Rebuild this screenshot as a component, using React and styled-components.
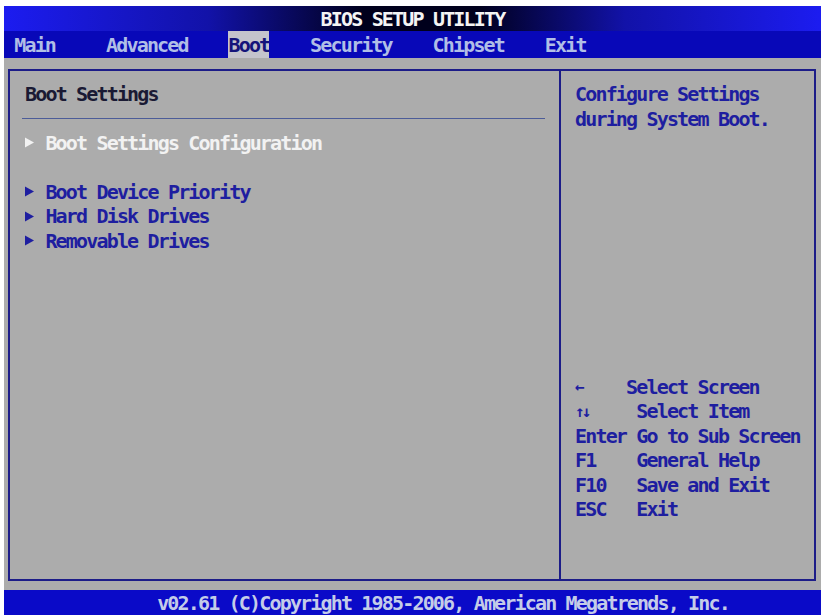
import React from 'react';
import styled, { createGlobalStyle } from 'styled-components';

const CELL = 10.21;
const ROW = 24.4;

const GlobalStyle = createGlobalStyle`
  html, body {
    margin: 0;
    background: #ffffff;
  }
`;

const Screen = styled.div`
  width: 821px;
  height: 615px;
  box-sizing: border-box;
  padding: 6px 0 0 4px;
  display: flex;
  flex-direction: column;
  overflow: hidden;
  font-family: 'DejaVu Sans Mono', 'Liberation Mono', monospace;
  font-size: 20px;
  font-weight: bold;
  letter-spacing: ${CELL - 12.04}px;
  white-space: pre;
`;

const TitleBar = styled.div`
  height: 25px;
  display: flex;
  align-items: center;
  justify-content: center;
  color: #f4f4f4;
  background: linear-gradient(
    to right,
    #1c1cf0 0%,
    #1212a8 25%,
    #00001c 44%,
    #00001c 58%,
    #1212a8 76%,
    #1c1cf0 100%
  );
`;

const MenuBar = styled.div`
  height: 27px;
  display: grid;
  grid-template-columns: repeat(80, ${CELL}px);
  background: #0808b8;
`;

const Tab = styled.div`
  grid-column: ${(props) => props.col + 1} / span ${(props) => props.len};
  display: flex;
  align-items: center;
  color: ${(props) => (props.active ? '#14147a' : '#b0bee6')};
  background: ${(props) => (props.active ? '#c4c4cc' : 'transparent')};
`;

const Body = styled.div`
  flex: 1;
  display: flex;
  background: #acacac;
  padding: 11px 5px 9px 4px;
`;

const Panel = styled.div`
  flex: 1;
  display: grid;
  grid-template-columns: 551px 1fr;
  border: 2px solid #1c1c88;
`;

const LeftPane = styled.div`
  border-right: 2px solid #1c1c88;
  padding: 11px 14px 0 15px;
`;

const RightPane = styled.div`
  padding: 11px 0 0 14px;
`;

const Line = styled.div`
  height: ${ROW}px;
  display: flex;
  align-items: center;
  color: ${(props) => props.color || '#1e1ea0'};
`;

const Heading = styled(Line)`
  color: #1a1a34;
`;

const Rule = styled.div`
  height: ${ROW}px;
  display: flex;
  align-items: center;
  margin-left: -3px;

  &::after {
    content: '';
    flex: 1;
    height: 1px;
    background: #4c5c98;
  }
`;

const Marker = styled.span`
  width: ${2 * CELL}px;
  display: inline-flex;
  align-items: center;
`;

const HelpList = styled.div`
  margin-top: ${10 * ROW}px;
`;

const HelpRow = styled.div`
  height: ${ROW}px;
  display: grid;
  grid-template-columns: ${6 * CELL}px auto;
  align-items: center;
  color: #1e1ea0;
`;

const Key = styled.span`
  font-size: ${(props) => (props.small ? '16px' : '20px')};
  letter-spacing: ${(props) => (props.small ? '-3px' : 'inherit')};
`;

const Desc = styled.span`
  margin-left: ${(props) => (props.shift ? -CELL * props.shift : 0)}px;
`;

const Footer = styled.div`
  height: 25px;
  display: flex;
  align-items: center;
  padding-left: ${15 * CELL}px;
  background: #0a0ac8;
  color: #c4cce8;
`;

const tabs = [
  { label: 'Main', col: 1 },
  { label: 'Advanced', col: 10 },
  { label: 'Boot', col: 22, active: true },
  { label: 'Security', col: 30 },
  { label: 'Chipset', col: 42 },
  { label: 'Exit', col: 53 },
];

const help = [
  { key: '←', small: true, desc: 'Select Screen', shift: 1 },
  { key: '↑↓', small: true, desc: 'Select Item' },
  { key: 'Enter', desc: 'Go to Sub Screen' },
  { key: 'F1', desc: 'General Help' },
  { key: 'F10', desc: 'Save and Exit' },
  { key: 'ESC', desc: 'Exit' },
];

const Arrow = ({ color }) => (
  <svg width="9" height="11" viewBox="0 0 9 11">
    <polygon points="0,0.5 9,5.5 0,10.5" fill={color} />
  </svg>
);

const SubMenu = ({ label, color }) => (
  <Line color={color}>
    <Marker>
      <Arrow color={color} />
    </Marker>
    {label}
  </Line>
);

const App = () => {
  return (
    <>
      <GlobalStyle />
      <Screen>
        <TitleBar>BIOS SETUP UTILITY</TitleBar>
        <MenuBar>
          {tabs.map((t) => (
            <Tab key={t.label} col={t.col} len={t.label.length} active={t.active}>
              {t.label}
            </Tab>
          ))}
        </MenuBar>
        <Body>
          <Panel>
            <LeftPane>
              <Heading>Boot Settings</Heading>
              <Rule />
              <SubMenu label="Boot Settings Configuration" color="#f2f2f2" />
              <Line />
              <SubMenu label="Boot Device Priority" color="#1e1ea0" />
              <SubMenu label="Hard Disk Drives" color="#1e1ea0" />
              <SubMenu label="Removable Drives" color="#1e1ea0" />
            </LeftPane>
            <RightPane>
              <Line>Configure Settings</Line>
              <Line>during System Boot.</Line>
              <HelpList>
                {help.map((h) => (
                  <HelpRow key={h.key}>
                    <Key small={h.small}>{h.key}</Key>
                    <Desc shift={h.shift}>{h.desc}</Desc>
                  </HelpRow>
                ))}
              </HelpList>
            </RightPane>
          </Panel>
        </Body>
        <Footer>v02.61 (C)Copyright 1985-2006, American Megatrends, Inc.</Footer>
      </Screen>
    </>
  );
};

export default App;
